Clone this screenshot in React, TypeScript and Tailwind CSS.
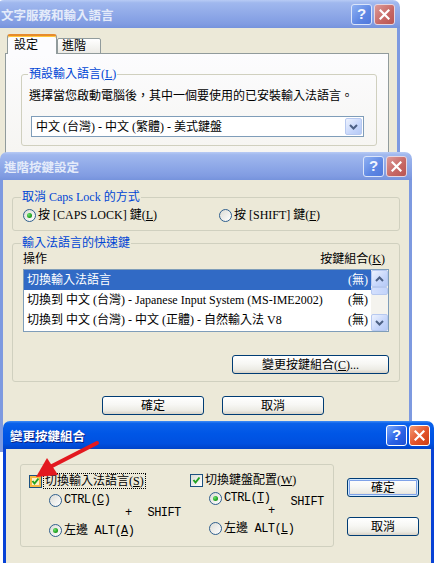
import React from "react";

const UI = "font-['Liberation_Serif','Noto_Sans_CJK_TC',serif] text-[12px] leading-[16px] text-black";
const MONO = "font-['Liberation_Mono','Noto_Sans_CJK_TC',monospace] text-[12px] tracking-[-0.6px]";

function CapButtons({ active }: { active: boolean }) {
  return (
    <div className="flex gap-[2px]">
      <div
        className={
          active
            ? "flex h-[21px] w-[21px] items-center justify-center rounded-[3px] border border-white bg-[linear-gradient(135deg,#7aa8fb,#2a62e6_55%,#1d4fd4)] font-['Liberation_Sans',sans-serif] text-[15px] font-bold text-white"
            : "flex h-[21px] w-[21px] items-center justify-center rounded-[3px] border border-[#dbe5fa] bg-[linear-gradient(135deg,#8fb1f3,#5d86e3_60%,#5179dc)] font-['Liberation_Sans',sans-serif] text-[15px] font-bold text-[#f2f6fe]"
        }
      >
        ?
      </div>
      <div
        className={
          active
            ? "flex h-[21px] w-[21px] items-center justify-center rounded-[3px] border border-white bg-[linear-gradient(135deg,#f59a72,#e2532a_55%,#cc3d12)]"
            : "flex h-[21px] w-[21px] items-center justify-center rounded-[3px] border border-[#e6d6e0] bg-[linear-gradient(135deg,#dd9a98,#c66663_60%,#b95552)]"
        }
      >
        <svg width="11" height="11" viewBox="0 0 11 11">
          <path d="M1.5 1.5 L9.5 9.5 M9.5 1.5 L1.5 9.5" stroke="white" strokeWidth="2.2" strokeLinecap="square" />
        </svg>
      </div>
    </div>
  );
}

function Win({
  title,
  active = false,
  className,
  children,
}: {
  title: string;
  active?: boolean;
  className: string;
  children: React.ReactNode;
}) {
  return (
    <div className={`absolute flex flex-col ${className}`}>
      <div
        className={
          active
            ? "flex h-[28px] shrink-0 items-center rounded-t-[7px] bg-[linear-gradient(180deg,#3d8bf5_0%,#0a61ea_9%,#0056e6_45%,#0050e0_80%,#0043c9_100%)] pl-[7px] pr-[4px]"
            : "flex h-[28px] shrink-0 items-center rounded-t-[7px] bg-[linear-gradient(180deg,#b8cbf5_0%,#a0b8ee_10%,#8fa9e8_50%,#819ce2_85%,#7693dc_100%)] pl-[4px] pr-[5px]"
        }
      >
        <span
          className={
            active
              ? "flex-1 pt-[1px] font-['Noto_Sans_CJK_TC',sans-serif] text-[12.5px] font-bold text-white [text-shadow:1px_1px_0_#0b2080]"
              : "flex-1 pt-[1px] font-['Noto_Sans_CJK_TC',sans-serif] text-[12.5px] font-bold text-[#e4ebfa]"
          }
        >
          {title}
        </span>
        <CapButtons active={active} />
      </div>
      <div
        className={
          active
            ? "flex-1 border-x-[3px] border-[#0842d6] bg-[#ece9d8]"
            : "flex-1 border-x-[3px] border-[#7e9ae0] bg-[#ece9d8]"
        }
      >
        {children}
      </div>
    </div>
  );
}

function Radio({ on = false }: { on?: boolean }) {
  return (
    <span className="flex h-[13px] w-[13px] shrink-0 items-center justify-center rounded-full border border-[#2f5f8e] bg-[linear-gradient(135deg,#dcdcd6,#ffffff)]">
      {on && <span className="h-[5px] w-[5px] rounded-full bg-[radial-gradient(circle_at_35%_35%,#6ee36e,#21a121_60%,#1a7f1a)]" />}
    </span>
  );
}

function Check({ hover = false }: { hover?: boolean }) {
  return (
    <span
      className={
        hover
          ? "flex h-[13px] w-[13px] shrink-0 items-center justify-center border border-[#1c5180] bg-[#fdf2c6] shadow-[inset_0_0_0_2px_#f8b943]"
          : "flex h-[13px] w-[13px] shrink-0 items-center justify-center border border-[#1c5180] bg-[linear-gradient(135deg,#dcdcd6,#ffffff)]"
      }
    >
      <svg width="9" height="9" viewBox="0 0 9 9">
        <path d="M1.5 4 L3.5 6.5 L7.5 1.5" stroke="#21a121" strokeWidth="2" fill="none" />
      </svg>
    </span>
  );
}

function Btn({ children, className, def = false }: { children: React.ReactNode; className: string; def?: boolean }) {
  return (
    <div
      className={`flex items-center justify-center rounded-[3px] border border-[#003c74] bg-[linear-gradient(180deg,#ffffff_0%,#f7f7f4_45%,#ecebe4_80%,#d8d2c6_100%)] ${
        def ? "shadow-[inset_0_0_0_1px_#cee7ff,inset_0_0_0_2px_#7fa2e8]" : ""
      } ${className}`}
    >
      {children}
    </div>
  );
}

function ArrowBtn({ up = false }: { up?: boolean }) {
  return (
    <div className="flex h-[17px] w-[17px] shrink-0 items-center justify-center rounded-[2px] border border-[#b7c9f0] bg-[linear-gradient(135deg,#eef3fe,#c6d6fb_60%,#b6caf6)]">
      <svg width="9" height="6" viewBox="0 0 9 6">
        <path d={up ? "M1 5 L4.5 1.5 L8 5" : "M1 1 L4.5 4.5 L8 1"} stroke="#4d6185" strokeWidth="2" fill="none" />
      </svg>
    </div>
  );
}

const shortcuts = [
  { name: "切換輸入法語言", selected: true },
  { name: "切換到 中文 (台灣) - Japanese Input System (MS-IME2002)", selected: false },
  { name: "切換到 中文 (台灣) - 中文 (正體) - 自然輸入法 V8", selected: false },
];

export default function App() {
  return (
    <div className={`relative h-[563px] w-[434px] overflow-hidden bg-white ${UI}`}>
      {/* 文字服務和輸入語言 */}
      <Win title="文字服務和輸入語言" className="left-[-3px] top-0 h-[200px] w-[403px]">
        <div className="pl-[5px] pr-[8px] pt-[6px]">
          <div className="relative z-10 -mb-px flex items-end pl-[2px]">
            <div className="h-[20px] w-[50px] rounded-t-[3px] border-x border-t-2 border-[#919b9c] border-t-[#e68b2c] bg-[#fcfcfe] pl-[6px] pt-[1px] shadow-[inset_0_1px_0_#ffc83c]">
              設定
            </div>
            <div className="h-[16px] w-[44px] rounded-t-[2px] border border-[#919b9c] bg-[linear-gradient(180deg,#ffffff,#ecebe6)] pl-[4px] leading-[15px]">
              進階
            </div>
          </div>
          <div className="h-[130px] border border-[#919b9c] bg-[linear-gradient(180deg,#fcfcfe,#f4f3ee)] pl-[15px] pr-[11px] pt-[12px]">
            <fieldset className="rounded-[3px] border border-[#d0d0bf] pb-[8px]">
              <legend className="ml-[6px] px-[1px] text-[#0046d5]">
                預設輸入語言(<u>L</u>)
              </legend>
              <div className="mt-[6px] pl-[7px]">選擇當您啟動電腦後，其中一個要使用的已安裝輸入法語言。</div>
              <div className="ml-[9px] mt-[12px] flex h-[21px] w-[333px] items-center border border-[#7f9db9] bg-white pl-[4px] pr-px">
                <span className="flex-1">中文 (台灣) - 中文 (繁體) - 美式鍵盤</span>
                <ArrowBtn />
              </div>
            </fieldset>
          </div>
        </div>
      </Win>

      {/* 進階按鍵設定 */}
      <Win title="進階按鍵設定" className="left-0 top-[152px] h-[300px] w-[412px]">
        <div className="px-[9px] pt-[9px]">
          <fieldset className="rounded-[3px] border border-[#d0d0bf] pb-[7px]">
            <legend className="ml-[8px] px-[1px] text-[#0046d5]">取消 Caps Lock 的方式</legend>
            <div className="mt-[2px] flex pl-[10px]">
              <div className="flex w-[196px] items-center gap-[2px]">
                <Radio on />
                <span>
                  按 [CAPS LOCK] 鍵(<u>L</u>)
                </span>
              </div>
              <div className="flex items-center gap-[2px]">
                <Radio />
                <span>
                  按 [SHIFT] 鍵(<u>F</u>)
                </span>
              </div>
            </div>
          </fieldset>

          <fieldset className="mt-[4px] rounded-[3px] border border-[#d0d0bf] pb-[7px]">
            <legend className="ml-[8px] px-[1px] text-[#0046d5]">輸入法語言的快速鍵</legend>
            <div className="flex justify-between pl-[10px] pr-[14px]">
              <span>操作</span>
              <span>
                按鍵組合(<u>K</u>)
              </span>
            </div>
            <div className="ml-[10px] mt-[2px] flex h-[63px] w-[366px] border border-[#7f9db9] bg-white">
              <div className="flex-1">
                {shortcuts.map((s) => (
                  <div
                    key={s.name}
                    className={
                      s.selected
                        ? "flex h-[20px] items-center bg-[#316ac5] pl-[3px] pr-[3px] text-white"
                        : "flex h-[20px] items-center pl-[3px] pr-[3px]"
                    }
                  >
                    <span className="flex-1 whitespace-nowrap">{s.name}</span>
                    <span>(無)</span>
                  </div>
                ))}
              </div>
              <div className="flex w-[17px] flex-col bg-[#f4f3ee]">
                <ArrowBtn up />
                <div className="h-[8px] rounded-[2px] border border-[#b7c9f0] bg-[linear-gradient(90deg,#d4e0fd,#c3d4fb)]" />
                <div className="flex-1" />
                <ArrowBtn />
              </div>
            </div>
            <div className="mt-[23px] flex justify-end pr-[10px]">
              <Btn className="h-[19px] w-[157px]">
                變更按鍵組合(<u>C</u>)...
              </Btn>
            </div>
          </fieldset>

          <div className="mt-[14px] flex gap-[18px] pl-[90px]">
            <Btn className="h-[19px] w-[102px]">確定</Btn>
            <Btn className="h-[19px] w-[102px]">取消</Btn>
          </div>
        </div>
      </Win>

      {/* 變更按鍵組合 */}
      <Win title="變更按鍵組合" active className="left-[3px] top-[421px] h-[160px] w-[431px]">
        <div className="flex pl-[14px] pt-[15px]">
          <div className="flex h-[83px] w-[314px] rounded-[3px] border border-[#d0d0bf] pl-[8px] pt-[8px]">
            <div className="flex w-[161px] flex-col">
              <div className="flex items-center gap-px">
                <Check hover />
                <span className="border border-dotted border-black px-px leading-[14px]">
                  切換輸入法語言(<u>S</u>)
                </span>
              </div>
              <div className={`mt-[3px] flex items-center gap-[2px] pl-[20px] ${MONO}`}>
                <Radio />
                <span>
                  CTRL(<u>C</u>)
                </span>
              </div>
              <div className={`-mt-[3px] flex items-center pl-[96px] ${MONO}`}>
                <span>+</span>
                <span className="ml-[16px]">SHIFT</span>
              </div>
              <div className={`flex items-center gap-[2px] pl-[20px] ${MONO}`}>
                <Radio on />
                <span>
                  <span className="font-['Noto_Sans_CJK_TC',sans-serif] tracking-normal">左邊</span> ALT(<u>A</u>)
                </span>
              </div>
            </div>
            <div className="flex flex-col">
              <div className="flex items-center gap-[2px]">
                <Check />
                <span className="leading-[14px]">
                  切換鍵盤配置(<u>W</u>)
                </span>
              </div>
              <div className={`mt-[3px] flex items-center gap-[2px] pl-[19px] ${MONO}`}>
                <Radio on />
                <span>
                  CTRL(<u>T</u>)
                </span>
              </div>
              <div className={`-mt-[3px] flex items-center pl-[78px] ${MONO}`}>
                <span>+</span>
                <span className="-mt-[9px] mb-[9px] ml-[16px]">SHIFT</span>
              </div>
              <div className={`flex items-center gap-[2px] pl-[19px] ${MONO}`}>
                <Radio />
                <span>
                  <span className="font-['Noto_Sans_CJK_TC',sans-serif] tracking-normal">左邊</span> ALT(<u>L</u>)
                </span>
              </div>
            </div>
          </div>
          <div className="ml-[13px] mt-[14px] flex flex-col gap-[20px]">
            <Btn def className="h-[19px] w-[72px]">
              確定
            </Btn>
            <Btn className="h-[19px] w-[72px]">取消</Btn>
          </div>
        </div>
      </Win>

      {/* red pointer arrow drawn over the dialog */}
      <svg className="absolute left-[30px] top-[438px]" width="75" height="45" viewBox="0 0 75 45">
        <path d="M67 5 L22 28" stroke="#e3191f" strokeWidth="4" strokeLinecap="round" />
        <path d="M6 39 L17 20 L28 37 Z" fill="#e3191f" />
      </svg>
    </div>
  );
}
